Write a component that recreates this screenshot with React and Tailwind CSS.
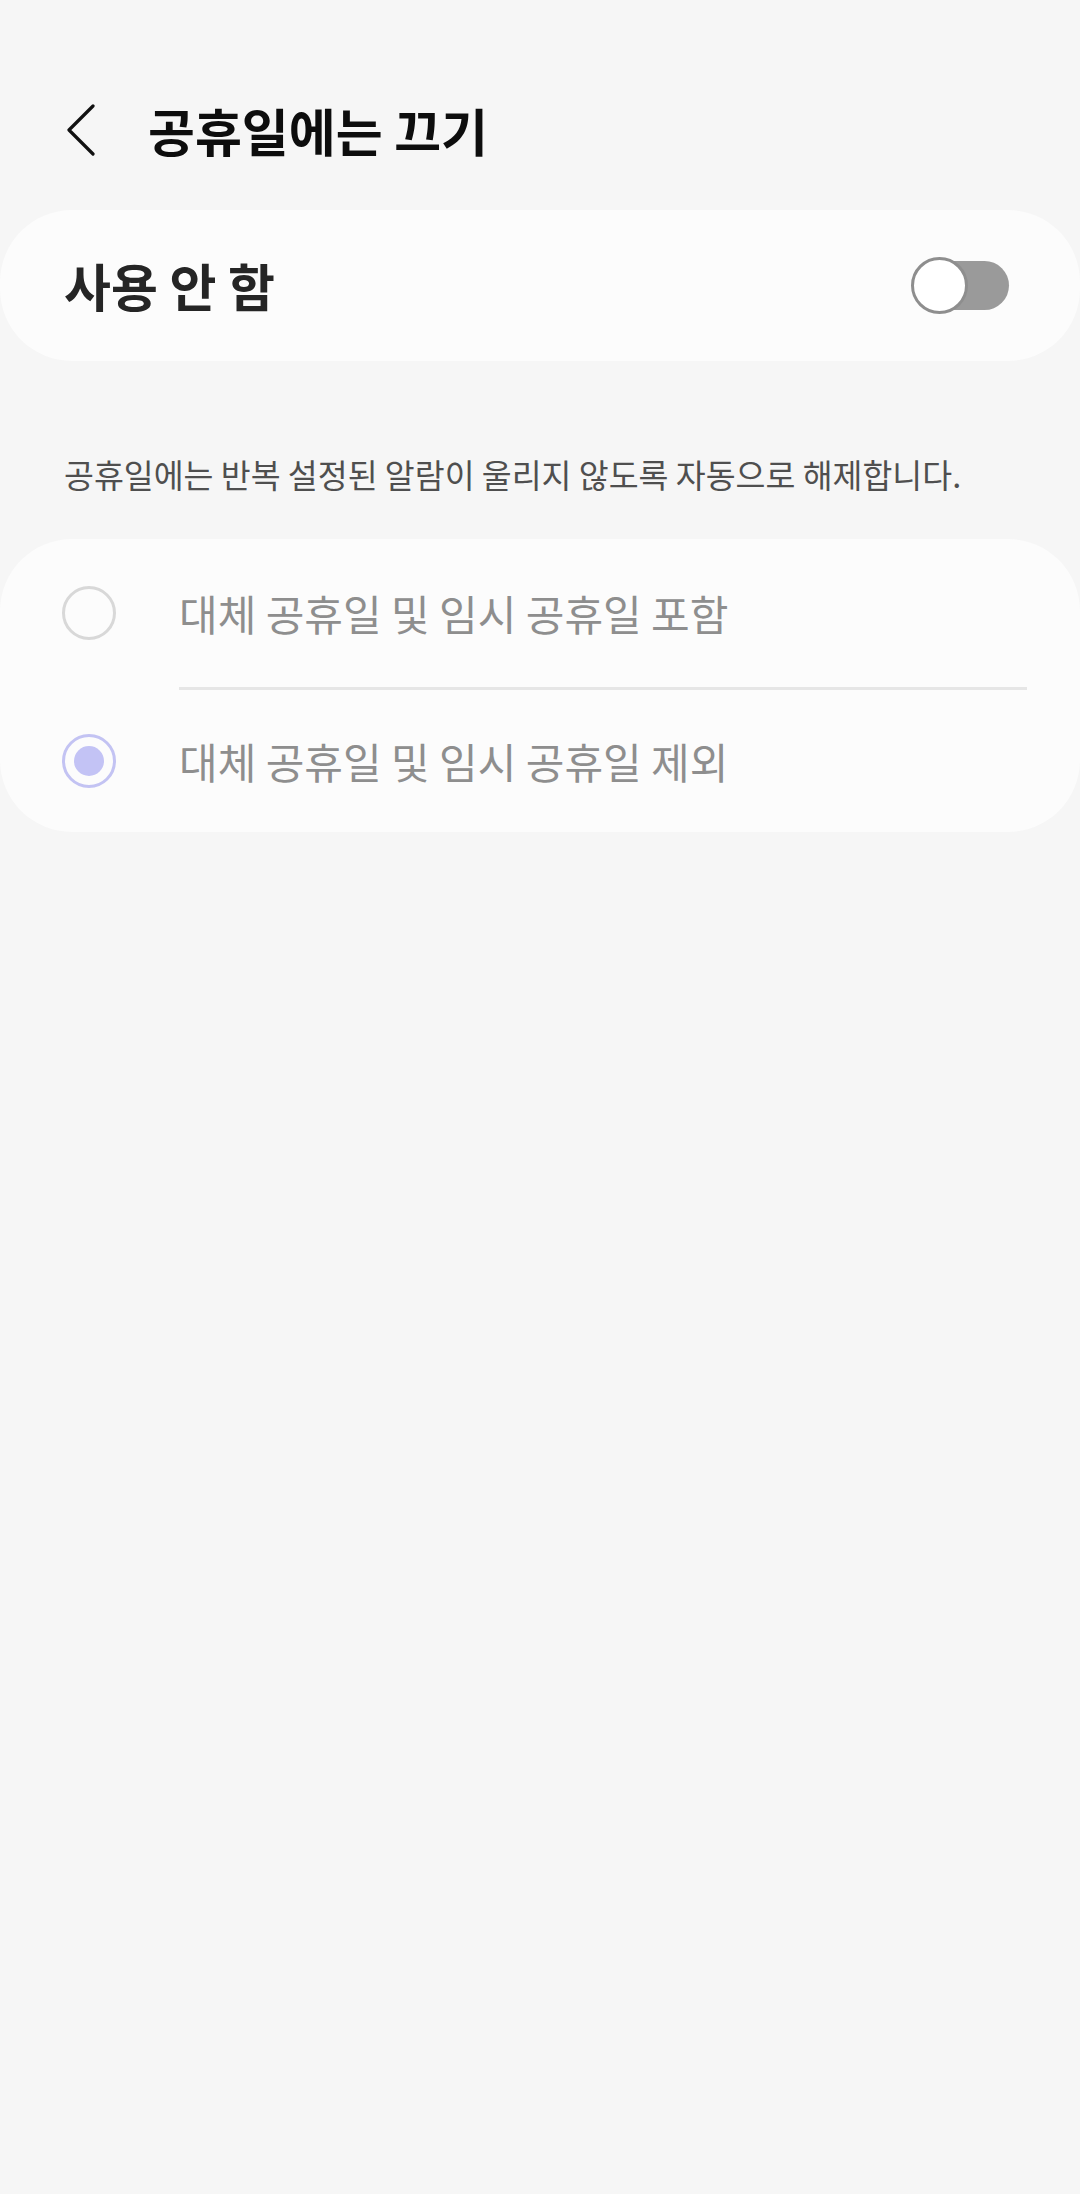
import { useState } from 'react';

const RadioRow = ({ label, checked }) => (
  <div className="flex items-center h-full pl-[62px]">
    <div
      className={`w-[54px] h-[54px] rounded-full border-[3px] flex items-center justify-center ${
        checked ? 'border-[#c3c3f3]' : 'border-[#d8d8d8]'
      }`}
    >
      {checked && <div className="w-[30px] h-[30px] rounded-full bg-[#c3c3f5]" />}
    </div>
    <span className="ml-[63px] text-[42px] leading-none text-[#8e8e8e]">{label}</span>
  </div>
);

const App = () => {
  const [enabled] = useState(false);

  return (
    <div className="min-h-[2194px] w-[1080px] pt-[100px] bg-[#f6f6f6] font-['Noto_Sans_CJK_KR',sans-serif]">
      {/* Header */}
      <div className="flex items-center h-[60px] pl-[66px]">
        <svg width="30" height="52" viewBox="0 0 30 52" fill="none">
          <polyline
            points="27,2 3,26 27,50"
            stroke="#111"
            strokeWidth="3.2"
            strokeLinecap="round"
            strokeLinejoin="round"
          />
        </svg>
        <h1 className="ml-[52px] text-[51px] font-bold leading-none text-[#0d0d0d]">공휴일에는 끄기</h1>
      </div>

      {/* Master switch */}
      <div className="mt-[50px] h-[151px] rounded-[72px] bg-[#fcfcfc] flex items-center justify-between pl-[64px] pr-[71px]">
        <span className="text-[51px] font-bold leading-none text-[#252525]">사용 안 함</span>
        <div className="relative w-[98px] h-[57px]">
          <div className="absolute right-0 top-[4px] h-[49px] w-[80px] rounded-full bg-[#9a9a9a]" />
          <div
            className={`absolute top-0 w-[57px] h-[57px] rounded-full bg-white border-[3px] border-[#8e8e8e] ${
              enabled ? 'right-0' : 'left-0'
            }`}
          />
        </div>
      </div>

      {/* Description */}
      <p className="mt-[94px] pl-[64px] text-[32.5px] leading-[38px] text-[#4f4f4f]">
        공휴일에는 반복 설정된 알람이 울리지 않도록 자동으로 해제합니다.
      </p>

      {/* Options */}
      <div className="mt-[46px] rounded-[72px] bg-[#fcfcfc]">
        <div className="h-[148px]">
          <RadioRow label="대체 공휴일 및 임시 공휴일 포함" checked={false} />
        </div>
        <div className="ml-[179px] mr-[53px] h-[3px] bg-[#e6e6e6]" />
        <div className="h-[142px]">
          <RadioRow label="대체 공휴일 및 임시 공휴일 제외" checked />
        </div>
      </div>
    </div>
  );
};

export default App;
